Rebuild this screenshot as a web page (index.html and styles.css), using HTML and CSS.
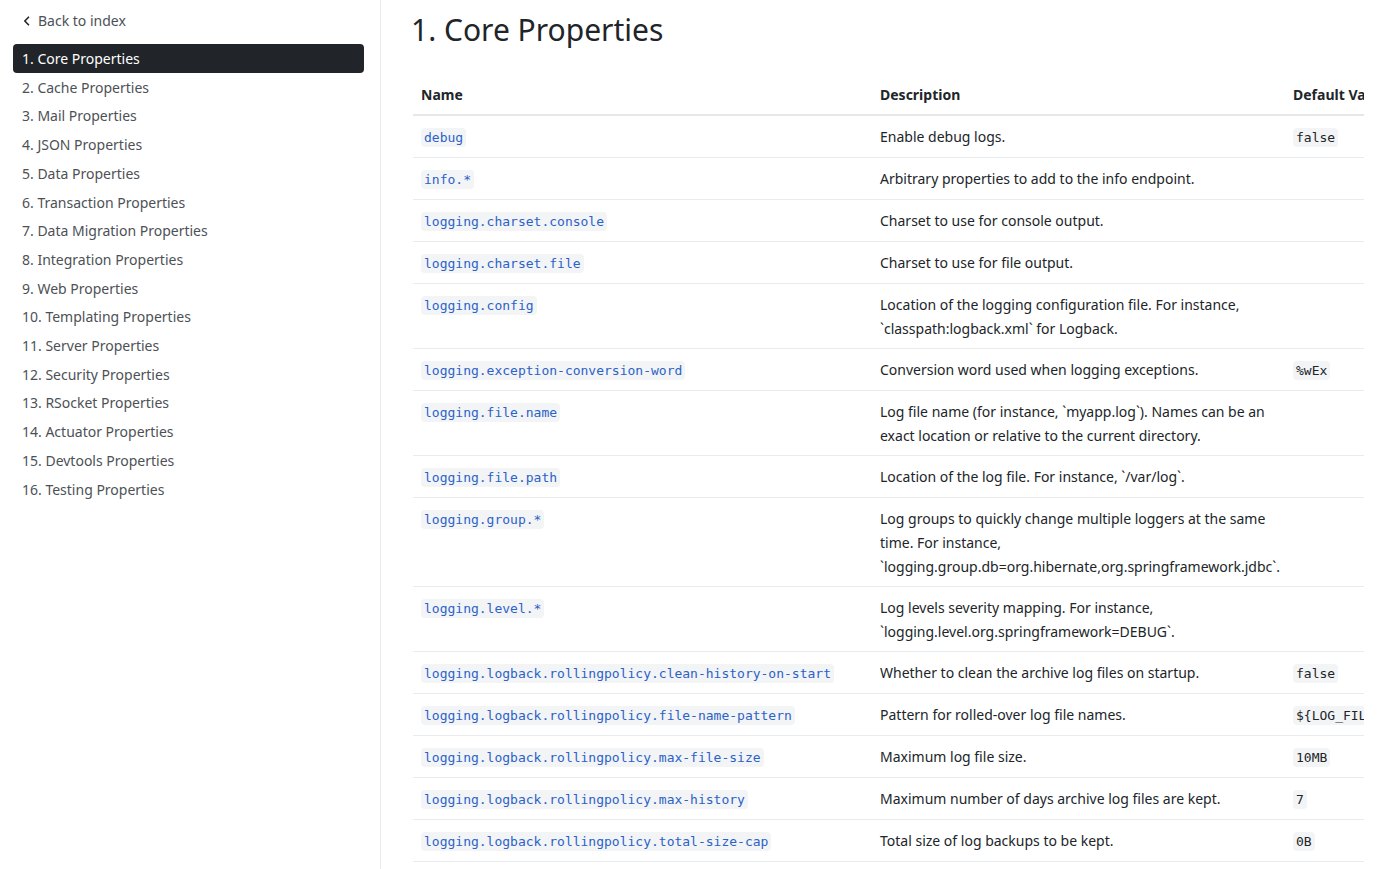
FILE: index.html
```html
<!DOCTYPE html>
<html lang="en">
<head>
<meta charset="utf-8">
<title>Core Properties</title>
<link rel="stylesheet" href="styles.css">
</head>
<body>
<div class="layout">
  <aside class="sidebar">
    <a class="back" href="#"><svg class="chev" width="10" height="10" viewBox="0 0 10 10"><path d="M6.5 1.2 L2.8 5 L6.5 8.8" fill="none" stroke="#212529" stroke-width="1.6" stroke-linecap="round" stroke-linejoin="round"/></svg>Back to index</a>
    <nav class="nav">
      <a class="nav-item active" href="#">1. Core Properties</a>
      <a class="nav-item" href="#">2. Cache Properties</a>
      <a class="nav-item" href="#">3. Mail Properties</a>
      <a class="nav-item" href="#">4. JSON Properties</a>
      <a class="nav-item" href="#">5. Data Properties</a>
      <a class="nav-item" href="#">6. Transaction Properties</a>
      <a class="nav-item" href="#">7. Data Migration Properties</a>
      <a class="nav-item" href="#">8. Integration Properties</a>
      <a class="nav-item" href="#">9. Web Properties</a>
      <a class="nav-item" href="#">10. Templating Properties</a>
      <a class="nav-item" href="#">11. Server Properties</a>
      <a class="nav-item" href="#">12. Security Properties</a>
      <a class="nav-item" href="#">13. RSocket Properties</a>
      <a class="nav-item" href="#">14. Actuator Properties</a>
      <a class="nav-item" href="#">15. Devtools Properties</a>
      <a class="nav-item" href="#">16. Testing Properties</a>
    </nav>
  </aside>
  <main class="main">
    <h1 class="title">1. Core Properties</h1>
    <div class="table-wrap">
      <table class="props">
        <colgroup><col class="c-name"><col class="c-desc"><col class="c-def"></colgroup>
        <thead>
          <tr><th>Name</th><th>Description</th><th>Default Value</th></tr>
        </thead>
        <tbody>
          <tr><td><code class="key">debug</code></td><td>Enable debug logs.</td><td><code class="val">false</code></td></tr>
          <tr><td><code class="key">info.*</code></td><td>Arbitrary properties to add to the info endpoint.</td><td></td></tr>
          <tr><td><code class="key">logging.charset.console</code></td><td>Charset to use for console output.</td><td></td></tr>
          <tr><td><code class="key">logging.charset.file</code></td><td>Charset to use for file output.</td><td></td></tr>
          <tr><td><code class="key">logging.config</code></td><td>Location of the logging configuration file. For instance, `classpath:logback.xml` for Logback.</td><td></td></tr>
          <tr><td><code class="key">logging.exception-conversion-word</code></td><td>Conversion word used when logging exceptions.</td><td><code class="val">%wEx</code></td></tr>
          <tr><td><code class="key">logging.file.name</code></td><td>Log file name (for instance, `myapp.log`). Names can be an exact location or relative to the current directory.</td><td></td></tr>
          <tr><td><code class="key">logging.file.path</code></td><td>Location of the log file. For instance, `/var/log`.</td><td></td></tr>
          <tr><td><code class="key">logging.group.*</code></td><td>Log groups to quickly change multiple loggers at the same time. For instance, `logging.group.db=org.hibernate,org.springframework.jdbc`.</td><td></td></tr>
          <tr><td><code class="key">logging.level.*</code></td><td>Log levels severity mapping. For instance, `logging.level.org.springframework=DEBUG`.</td><td></td></tr>
          <tr><td><code class="key">logging.logback.rollingpolicy.clean-history-on-start</code></td><td>Whether to clean the archive log files on startup.</td><td><code class="val">false</code></td></tr>
          <tr><td><code class="key">logging.logback.rollingpolicy.file-name-pattern</code></td><td>Pattern for rolled-over log file names.</td><td><code class="val">${LOG_FILE}.%d{yyyy-MM-dd}.%i.gz</code></td></tr>
          <tr><td><code class="key">logging.logback.rollingpolicy.max-file-size</code></td><td>Maximum log file size.</td><td><code class="val">10MB</code></td></tr>
          <tr><td><code class="key">logging.logback.rollingpolicy.max-history</code></td><td>Maximum number of days archive log files are kept.</td><td><code class="val">7</code></td></tr>
          <tr><td><code class="key">logging.logback.rollingpolicy.total-size-cap</code></td><td>Total size of log backups to be kept.</td><td><code class="val">0B</code></td></tr>
          <tr><td><code class="key">logging.pattern.console</code></td><td>Appender pattern for output to the console. Supported only with the default Logback setup.</td><td></td></tr>
          <tr><td><code class="key">logging.pattern.dateformat</code></td><td>Appender pattern for log date format. Supported only with the default Logback setup.</td><td><code class="val">yyyy-MM-dd'T'HH:mm:ss.SSSXXX</code></td></tr>
        </tbody>
      </table>
    </div>
  </main>
</div>
</body>
</html>
```

FILE: styles.css
```css
* { box-sizing: border-box; }

html, body {
  margin: 0;
  padding: 0;
  background: #ffffff;
}

body {
  font-family: "Noto Sans", "Open Sans", sans-serif;
  font-size: 14px;
  line-height: 24px;
  color: #212529;
}

.layout {
  display: flex;
  align-items: stretch;
  min-height: 100vh;
}

.sidebar {
  flex: 0 0 381px;
  width: 381px;
  padding: 9px 16px 0 13px;
  border-right: 1px solid #e9ecef;
}

.back {
  display: flex;
  align-items: center;
  gap: 6px;
  padding-left: 9px;
  height: 24px;
  color: #4d5156;
  text-decoration: none;
}

.chev {
  display: block;
  flex: 0 0 10px;
}

.nav {
  display: flex;
  flex-direction: column;
  margin-top: 11px;
}

.nav-item {
  display: block;
  padding: 5px 9px 3px;
  line-height: 20.7px;
  color: #4d5156;
  text-decoration: none;
  border-radius: 4px;
}

.nav-item.active {
  background: #212529;
  color: #ffffff;
}

.main {
  flex: 1 1 auto;
  min-width: 0;
  padding: 12px 17px 0 32px;
}

.title {
  margin: 0 0 0 -2px;
  font-size: 30px;
  line-height: 36px;
  font-weight: 400;
  color: #212529;
}

.table-wrap {
  margin-top: 26px;
  overflow: hidden;
}

.props {
  border-collapse: collapse;
  table-layout: fixed;
  width: 1172px;
}

.c-name { width: 459px; }
.c-desc { width: 413px; }
.c-def { width: 300px; }

.props th {
  text-align: left;
  font-weight: 700;
  padding: 9px 8px 7px;
  border-bottom: 2px solid #e5e8eb;
  white-space: nowrap;
}

.props td {
  padding: 9px 8px 7px;
  vertical-align: top;
  border-bottom: 1px solid #e9ecef;
}

.props td:last-child {
  white-space: nowrap;
}

code {
  font-family: "DejaVu Sans Mono", "Liberation Mono", monospace;
  font-size: 13px;
  padding: 2px 3px;
  border-radius: 4px;
  background: #f3f4f5;
}

.key { color: #2a62c9; }
.val { color: #212529; }
```
